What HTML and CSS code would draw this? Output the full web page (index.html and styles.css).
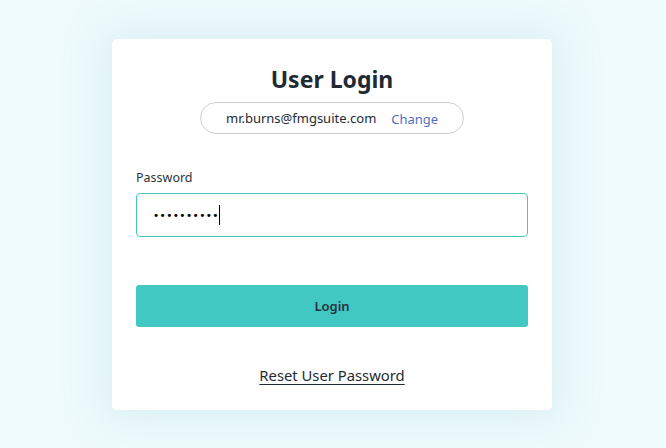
FILE: index.html
```html
<!DOCTYPE html>
<html>
<head>
<meta charset="utf-8">
<link rel="stylesheet" href="styles.css">
</head>
<body>
<div class="page">
  <div class="card">
    <h1 class="title">User Login</h1>
    <div class="pill">
      <span class="email">mr.burns@fmgsuite.com</span>
      <a class="change">Change</a>
    </div>
    <label class="label">Password</label>
    <div class="input">
      <span class="dots">••••••••••</span><span class="caret"></span>
    </div>
    <button class="btn">Login</button>
    <a class="reset">Reset User Password</a>
  </div>
</div>
</body>
</html>
```
FILE: styles.css
```css
* { box-sizing: border-box; }
html, body { margin: 0; padding: 0; }
body {
  background: #effbfd;
  font-family: "Noto Sans", "Open Sans", sans-serif;
  color: #212b36;
  width: 666px;
  height: 448px;
  overflow: hidden;
}
.page {
  display: flex;
  justify-content: center;
  padding-top: 39px;
  padding-right: 2px;
}
.card {
  width: 440px;
  height: 371px;
  background: #fff;
  border-radius: 5px;
  box-shadow: 0 0 40px 10px rgba(150, 200, 210, 0.22);
  padding: 0 24px;
  display: flex;
  flex-direction: column;
}
.title {
  margin: 23px 0 0;
  text-align: center;
  font-size: 23px;
  font-weight: 700;
  line-height: 34px;
  color: #1f2a35;
}
.pill {
  align-self: center;
  width: 264px;
  height: 32px;
  margin-top: 6px;
  border: 1px solid #cfcfcf;
  border-radius: 16px;
  display: flex;
  align-items: center;
  padding-left: 25px;
  font-size: 13px;
}
.email { color: #222b35; }
.change { color: #4f6fc4; margin-left: 15px; padding-top: 1px; }
.label {
  margin-top: 35px;
  font-size: 12.5px;
  line-height: 18px;
  color: #2a3440;
}
.input {
  margin-top: 6px;
  height: 44px;
  border: 1px solid #43c7bf;
  border-radius: 4px;
  display: flex;
  align-items: center;
  padding-left: 16px;
}
.dots {
  font-family: "DejaVu Sans", sans-serif;
  font-size: 10.5px;
  letter-spacing: 0.4px;
  color: #000;
}
.caret {
  display: inline-block;
  width: 1px;
  height: 20px;
  background: #000;
  margin-left: 0;
}
.btn {
  margin-top: 48px;
  height: 42px;
  border: none;
  border-radius: 3px;
  background: #42c8c2;
  font-family: inherit;
  font-size: 13px;
  font-weight: 600;
  color: #253240;
}
.reset {
  margin-top: 38px;
  align-self: center;
  font-size: 14.8px;
  color: #222b35;
  text-decoration: underline;
  text-underline-offset: 3px;
}
```
